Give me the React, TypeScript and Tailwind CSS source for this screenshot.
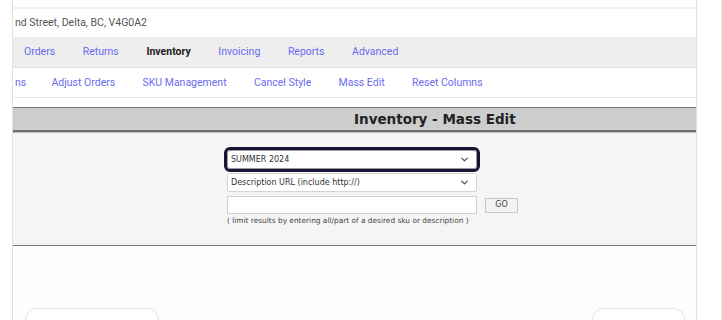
import { ChevronDown } from "lucide-react";

const mainNav = [
  { label: "Orders", active: false },
  { label: "Returns", active: false },
  { label: "Inventory", active: true },
  { label: "Invoicing", active: false },
  { label: "Reports", active: false },
  { label: "Advanced", active: false }
];

const subNav = ["ns", "Adjust Orders", "SKU Management", "Cancel Style", "Mass Edit", "Reset Columns"];

function Select({ value, focused }: { value: string; focused?: boolean }) {
  return (
    <div
      className={
        focused
          ? "flex h-[19px] w-[250px] items-center justify-between rounded-[3px] border border-[#9a9a9a] bg-white pl-[3px] pr-[6px] outline-[3px] outline-[#1b1236] outline-solid"
          : "flex h-[19px] w-[250px] items-center justify-between rounded-[2px] border border-[#d4d4d4] bg-white pl-[3px] pr-[6px]"
      }
    >
      <span className="text-[8px] leading-none text-[#333]">{value}</span>
      <ChevronDown className="h-[11px] w-[11px] text-[#555]" strokeWidth={3} aria-hidden="true" />
    </div>
  );
}

export default function App() {
  return (
    <div className="flex h-[320px] w-[722px] overflow-hidden bg-white font-['Roboto',sans-serif]">
      <div className="w-[12px] shrink-0 bg-white" />

      <div className="flex w-[685px] shrink-0 flex-col overflow-hidden border-x border-[#e2e2e2] bg-[#fdfdfd]">
        <div className="h-[7px] bg-white" />
        <div className="h-[2px] bg-[#f0f0f0]" />

        <div className="flex h-[28px] items-center bg-white pl-[2px] text-[10.5px] text-[#555]">
          nd Street, Delta, BC, V4G0A2
        </div>

        <nav className="flex h-[31px] items-center gap-[27.6px] border-b border-[#dedede] bg-[#eeeeee] pl-[11px] text-[10.5px]">
          {mainNav.map((item) => (
            <span
              key={item.label}
              className={item.active ? "font-bold text-[#222]" : "text-[#6b6bef]"}
            >
              {item.label}
            </span>
          ))}
        </nav>

        <nav className="flex h-[30px] items-center gap-[27.3px] border-b border-[#e6e6e6] bg-white pl-[2px] text-[10.5px] text-[#6b6bef]">
          {subNav.map((item) => (
            <span key={item} className={item === "ns" ? "-mr-[2px]" : undefined}>
              {item}
            </span>
          ))}
        </nav>

        <div className="h-[9px] bg-white" />

        <div className="flex h-[25px] items-center border-t border-[#777] border-b-2 border-b-[#6e6e6e] bg-[#cdcdcd] pl-[341px]">
          <span className="font-['DejaVu_Sans',sans-serif] text-[13.5px] font-bold text-[#222]">
            Inventory - Mass Edit
          </span>
        </div>

        <div className="flex flex-col gap-[4px] border-t border-[#bdbdbd] border-b border-b-[#777] bg-[#f5f5f5] pb-[20px] pl-[214px] pt-[17px] font-['DejaVu_Sans',sans-serif]">
          <Select value="SUMMER 2024" focused />
          <Select value="Description URL (include http://)" />
          <div className="flex items-center gap-[8px]">
            <div className="h-[18px] w-[250px] border border-[#d0d0d0] bg-white" />
            <button
              type="button"
              className="h-[15px] w-[33px] border border-[#c8c8c8] bg-[#f3f3f3] text-[8px] leading-none text-[#444]"
            >
              GO
            </button>
          </div>
          <p className="-mt-[2px] text-[7.4px] leading-[9px] text-[#444]">
            ( limit results by entering all/part of a desired sku or description )
          </p>
        </div>

        <div className="flex flex-1 items-end justify-between px-[12px]">
          <div className="h-[12px] w-[134px] rounded-t-[16px] border-x border-t border-[#e6e6e6] bg-white" />
          <div className="mr-[-1px] h-[12px] w-[93px] rounded-t-[16px] border-x border-t border-[#e6e6e6] bg-white" />
        </div>
      </div>

      <div className="w-[25px] shrink-0 border-r border-[#eeeeee] bg-white" />
    </div>
  );
}
